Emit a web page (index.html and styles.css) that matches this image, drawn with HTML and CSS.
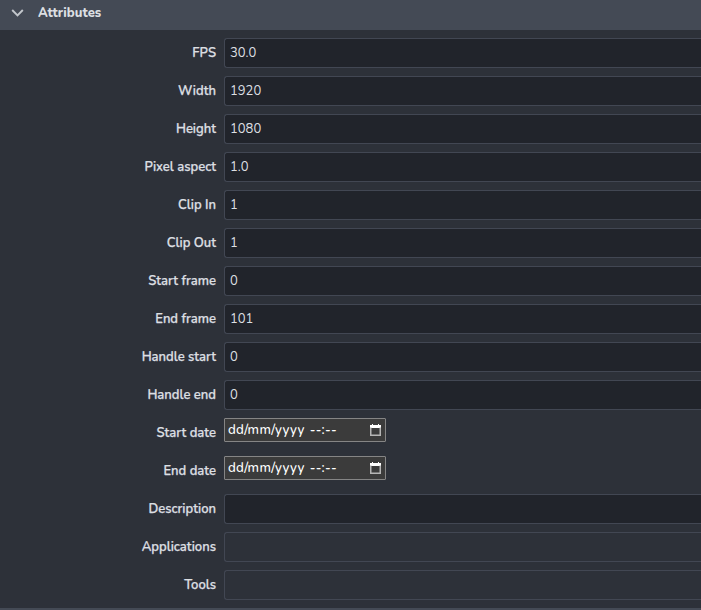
FILE: index.html
```html
<!DOCTYPE html>
<html lang="en">
<head>
<meta charset="utf-8">
<title>Attributes</title>
<link rel="stylesheet" href="styles.css">
</head>
<body>
<section class="panel">
  <header class="panel-header">
    <svg class="chevron" width="14" height="10" viewBox="0 0 14 10"><path d="M1.2 2 6.5 7.3 11.8 2" fill="none" stroke="currentColor" stroke-width="1.9"/></svg>
    <h1 class="title">Attributes</h1>
  </header>
  <div class="form">
    <div class="row"><span class="label">FPS</span><div class="field">30.0</div></div>
    <div class="row"><span class="label">Width</span><div class="field">1920</div></div>
    <div class="row"><span class="label">Height</span><div class="field">1080</div></div>
    <div class="row"><span class="label">Pixel aspect</span><div class="field">1.0</div></div>
    <div class="row"><span class="label">Clip In</span><div class="field">1</div></div>
    <div class="row"><span class="label">Clip Out</span><div class="field">1</div></div>
    <div class="row"><span class="label">Start frame</span><div class="field">0</div></div>
    <div class="row"><span class="label">End frame</span><div class="field">101</div></div>
    <div class="row"><span class="label">Handle start</span><div class="field">0</div></div>
    <div class="row"><span class="label">Handle end</span><div class="field">0</div></div>
    <div class="row"><span class="label">Start date</span><div class="date"><span class="day">dd/mm/yyyy</span><span class="time">--:--</span><svg class="calendar" width="11" height="12" viewBox="0 0 11 12"><path d="M0 1h11v3H0zM2 0h1v1H2zM8 0h1v1H8z" fill="#fff"/><path d="M.75 3.5v7.75h9.5V3.5" fill="none" stroke="#b5b5b5" stroke-width="1.5"/></svg></div></div>
    <div class="row"><span class="label">End date</span><div class="date"><span class="day">dd/mm/yyyy</span><span class="time">--:--</span><svg class="calendar" width="11" height="12" viewBox="0 0 11 12"><path d="M0 1h11v3H0zM2 0h1v1H2zM8 0h1v1H8z" fill="#fff"/><path d="M.75 3.5v7.75h9.5V3.5" fill="none" stroke="#b5b5b5" stroke-width="1.5"/></svg></div></div>
    <div class="row"><span class="label">Description</span><div class="field"></div></div>
    <div class="row"><span class="label">Applications</span><div class="field select"></div></div>
    <div class="row"><span class="label">Tools</span><div class="field select"></div></div>
  </div>
  <div class="next-header"></div>
</section>
</body>
</html>
```
FILE: styles.css
```css
* { box-sizing: border-box; }
body {
  margin: 0;
  background: #2d3139;
  color: #dcdfe2;
  font: 13px/20px Nunito, "Nunito Sans", "Open Sans", sans-serif;
  overflow: hidden;
}
.panel { height: 610px; display: flex; flex-direction: column; }
.panel-header {
  height: 30px;
  display: flex;
  align-items: center;
  gap: 13px;
  padding: 0 0 4px 11px;
  background: #444a55;
}
.chevron { color: #c3c7cc; }
.title { margin: 0; font-size: 13px; font-weight: 800; letter-spacing: .05px; }
.form { flex: 1; padding-top: 8px; display: flex; flex-direction: column; gap: 8px; }
.row { height: 30px; display: flex; gap: 8px; }
.label {
  width: 216px;
  text-align: right;
  line-height: 30px;
  font-weight: 600;
  -webkit-text-stroke: .25px currentColor;
}
.field {
  flex: 1;
  padding: 0 5px;
  line-height: 28px;
  background: #21242b;
  border: 1px solid #424753;
  border-right: 0;
  border-radius: 3px 0 0 3px;
}
.select { background: #2d3139; }
.date {
  width: 162px;
  height: 24px;
  display: flex;
  align-items: center;
  padding: 0 4px 0 3px;
  background: #3b3b3b;
  border: 1px solid #858585;
  border-radius: 1px;
  color: #fff;
  font-size: 13.33px;
  font-weight: 500;
}
.day { letter-spacing: .3px; }
.time { margin-left: 5px; letter-spacing: .4px; }
.calendar { margin-left: auto; }
.next-header { height: 2px; background: #444a55; }
```
